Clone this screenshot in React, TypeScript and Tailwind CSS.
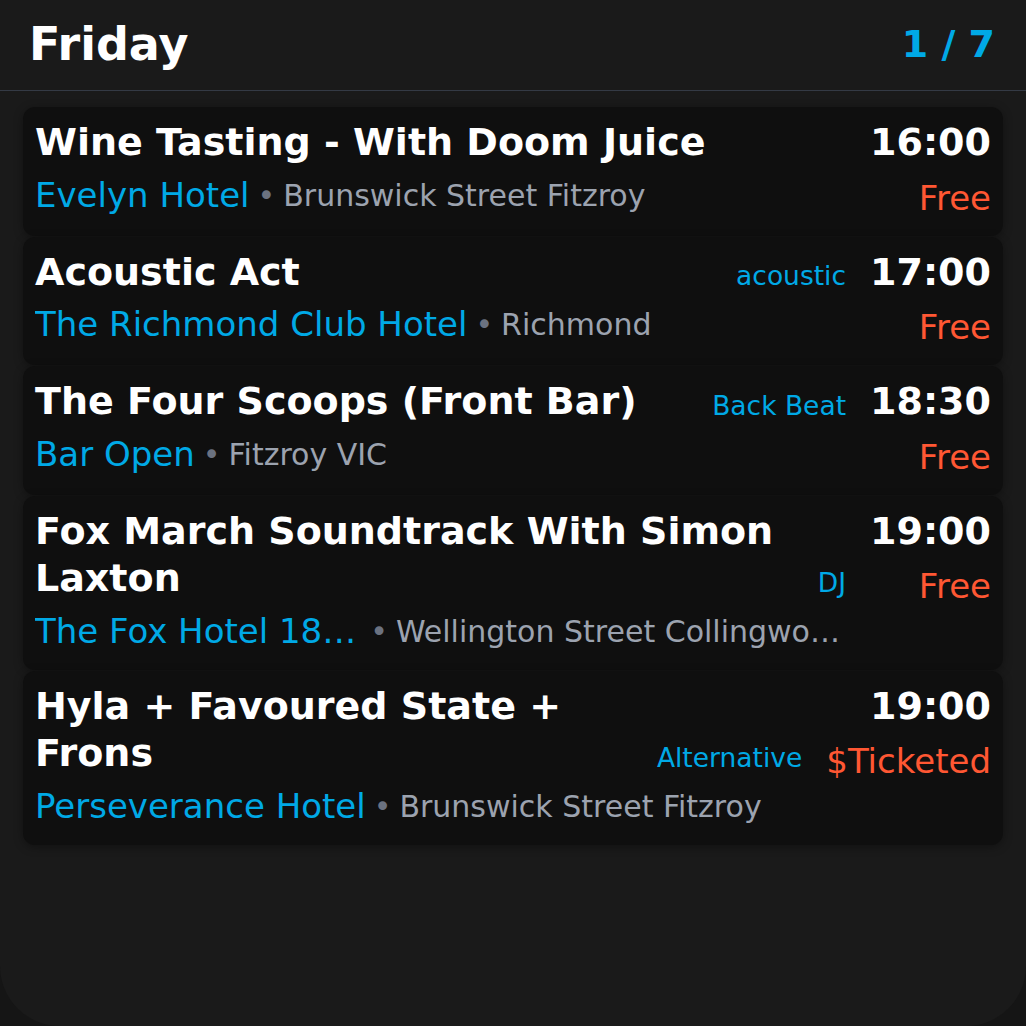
import React from "react";

type Ev = {
  title: string;
  venue: string;
  address: string;
  time: string;
  price: string;
  tag?: string;
};

const events: Ev[] = [
  { title: "Wine Tasting - With Doom Juice", venue: "Evelyn Hotel", address: "Brunswick Street Fitzroy", time: "16:00", price: "Free" },
  { title: "Acoustic Act", venue: "The Richmond Club Hotel", address: "Richmond", time: "17:00", price: "Free", tag: "acoustic" },
  { title: "The Four Scoops (Front Bar)", venue: "Bar Open", address: "Fitzroy VIC", time: "18:30", price: "Free", tag: "Back Beat" },
  { title: "Fox March Soundtrack With Simon Laxton", venue: "The Fox Hotel 180 Smith Street", address: "Wellington Street Collingwood", time: "19:00", price: "Free", tag: "DJ" },
  { title: "Hyla + Favoured State + Frons", venue: "Perseverance Hotel", address: "Brunswick Street Fitzroy", time: "19:00", price: "$Ticketed", tag: "Alternative" },
];

function Card({ ev }: { ev: Ev }) {
  return (
    <div className="flex gap-6 rounded-xl bg-[#0f0f0f] px-3 pt-3 pb-3 shadow-[0_2px_10px_rgba(0,0,0,0.35)]">
      <div className="flex min-w-0 flex-1 flex-col">
        <div className="flex items-end gap-6">
          <div className="min-w-0 flex-1 text-[38px] font-bold leading-[1.25] text-white">{ev.title}</div>
          {ev.tag && (
            <div className="shrink-0 text-[26.5px] leading-[1.5] text-[#00a9e6]">{ev.tag}</div>
          )}
        </div>
        <div className="mt-[2px] flex items-start leading-[53px]">
          <span className="min-w-0 truncate text-[34px] text-[#00a9e6]">{ev.venue}</span>
          <span className="mx-[8px] shrink-0 text-[30px] text-[#6b7280]">•</span>
          <span className="max-w-[55.5%] shrink-0 truncate text-[30px] text-[#9ca3af]">{ev.address}</span>
        </div>
      </div>
      <div className="flex shrink-0 flex-col items-end">
        <div className="text-[38px] font-bold leading-[1.25] text-white">{ev.time}</div>
        <div className="mt-[6px] text-[34px] leading-[51px] text-[#ff5733]">{ev.price}</div>
      </div>
    </div>
  );
}

export default function App() {
  return (
    <div className="min-h-screen bg-[#151515]" style={{ fontFamily: '"DejaVu Sans", sans-serif' }}>
      <div className="flex h-[1026px] flex-col overflow-hidden rounded-b-[60px] bg-[#1a1a1a]">
        <div className="flex h-[91px] shrink-0 items-center justify-between border-b border-[#343a45] pb-[2px] pl-[29px] pr-[31px]">
          <div className="text-[46px] font-bold leading-none text-white">Friday</div>
          <div className="text-[38px] font-bold leading-none text-[#00a9e6]">1 / 7</div>
        </div>
        <div className="flex flex-col gap-px px-[23px] pt-[16px]">
          {events.map((ev, i) => (
            <Card key={i} ev={ev} />
          ))}
        </div>
      </div>
    </div>
  );
}
